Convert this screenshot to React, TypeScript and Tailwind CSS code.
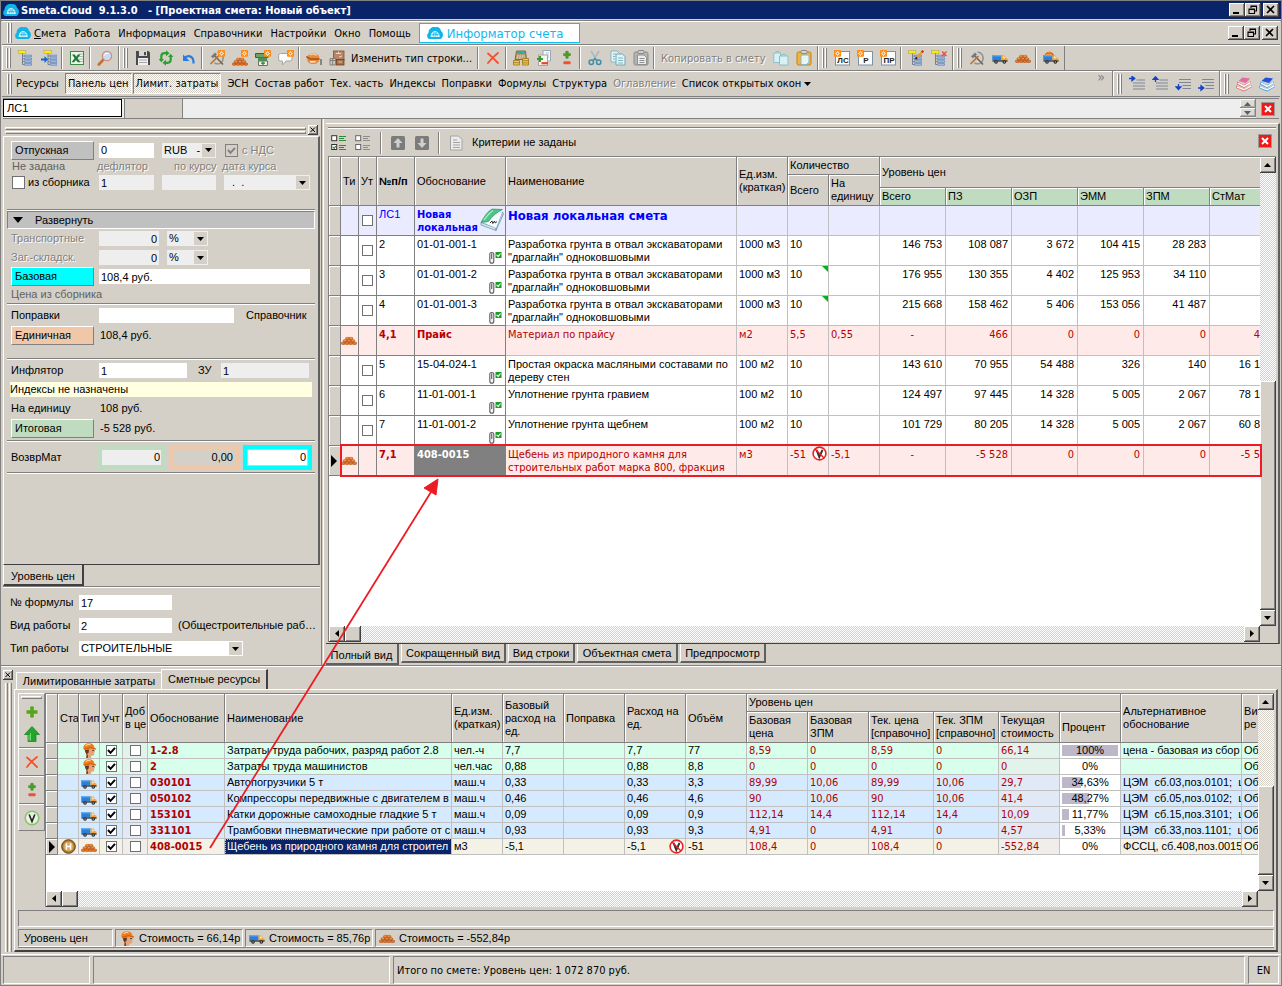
import React from "react";

type Kids = { children?: React.ReactNode };

const RAISED =
  "bg-[#d4d0c8] shadow-[inset_-1px_-1px_0_#404040,inset_1px_1px_0_#ffffff,inset_-2px_-2px_0_#808080]";
const SUNKEN = "border border-t-[#808080] border-l-[#808080] border-b-white border-r-white";
const TAHOMA = "font-['DejaVu_Sans_Condensed','DejaVu_Sans',sans-serif]";
const DITHER =
  "bg-[repeating-conic-gradient(#ffffff_0%_25%,#d4d0c8_0%_50%)] [background-size:2px_2px]";
const DISABLED = "text-[#808080] [text-shadow:1px_1px_0_#ffffff]";

/* ---------- icons ---------- */

function Svg({ children, size = "w-4 h-4", box = "0 0 16 16" }: Kids & { size?: string; box?: string }) {
  return (
    <svg viewBox={box} className={`${size} shrink-0`} fill="none" aria-hidden="true">
      {children}
    </svg>
  );
}

const Cloud = ({ size = "w-4 h-4" }: { size?: string }) => (
  <Svg size={size}>
    <path d="M3 14C-.5 14 -.5 9 1.500 8C1.500 3.500 5.500 1 8.500 2.300C11.500 1.500 13.800 3.500 14 6C16.800 7.500 16.500 13 13.500 14Z" fill="#10b4e8" />
    <path d="M4 11.500C4.500 7.500 6.500 6.500 8 6.500S11.800 7.500 12.300 11.500Z" fill="#b9ecfa" stroke="#fff" strokeWidth=".8" />
    <path d="M6.300 11.500L7 7M8.200 11.500V7M10.200 11.500L9.500 7M4.600 9.500H11.800" stroke="#10b4e8" strokeWidth=".6" />
  </Svg>
);

const TreeBody = () => (
  <>
    <path d="M4.500 3V14.500M4.500 6H7M4.500 8.800H7M4.500 11.600H7M4.500 14.500H7" stroke="#7b7f86" />
    <path d="M6.500 5.200H13.500V6.800H6.500ZM6.500 8H13.500V9.600H6.500ZM6.500 10.800H13.500V12.400H6.500ZM6.500 13.600H13.500V15.200H6.500Z" fill="#b7cdea" stroke="#6386ba" strokeWidth=".8" />
    <rect x=".4" y=".6" width="7.500" height="2.600" fill="#ffee00" stroke="#a8a048" strokeWidth=".5" />
  </>
);
const Tree = () => (
  <Svg>
    <TreeBody />
  </Svg>
);
const TreeInsert = () => (
  <Svg>
    <g transform="translate(2.500 0)">
      <TreeBody />
    </g>
    <path d="M0 9.500H5" stroke="#1463d8" strokeWidth="2" />
    <path d="M3.500 6L7 9.500L3.500 13Z" fill="#1463d8" />
  </Svg>
);
const TreeEdit = () => (
  <Svg>
    <TreeBody />
    <path d="M8.500 8L14.500 1.500" stroke="#e0a030" strokeWidth="2.400" />
    <path d="M13.800 2.300L15.200 .8" stroke="#d03020" strokeWidth="2.400" />
    <path d="M7.500 9L9 7.500" stroke="#222" strokeWidth="1.800" />
  </Svg>
);
const TreeDelete = () => (
  <Svg>
    <TreeBody />
    <path d="M11 1.500L15.500 6M15.500 1.500L11 6" stroke="#f04a3a" strokeWidth="1.400" />
  </Svg>
);
const Excel = () => (
  <Svg>
    <rect x="1.500" y="1.500" width="13" height="13" fill="#eef5ee" stroke="#3f8a4b" />
    <path d="M10 4H14M10 6.500H14M10 9H14M10 11.500H14" stroke="#9cc3a2" />
    <path d="M3 4.500H5.800L7.200 6.800L8.700 4.500H11.500L8.600 8.300L11.500 12.300H8.700L7 9.900L5.200 12.300H2.500L5.600 8.300Z" fill="#1f7a38" />
  </Svg>
);
const Magnifier = () => (
  <Svg>
    <path d="M1.800 14.500L6.500 9.500" stroke="#c8702a" strokeWidth="2.600" strokeLinecap="round" />
    <circle cx="10" cy="6" r="4.700" fill="#c9d9f5" stroke="#cf8d7a" strokeWidth="1.200" />
    <path d="M7.500 5.500C8 3.500 10 3 11.500 3.500" stroke="#fff" strokeWidth="1.200" />
  </Svg>
);
const Save = () => (
  <Svg>
    <path d="M1 1H13.500L15 2.500V15H1Z" fill="#4a4a4c" />
    <rect x="4" y="1" width="8" height="5" fill="#d8d8d8" />
    <rect x="9" y="2" width="2" height="3.200" fill="#4a4a4c" />
    <rect x="3" y="8" width="10" height="7" fill="#efefef" />
    <path d="M4 10H12M4 12.500H12" stroke="#a9a9a9" />
  </Svg>
);
const Refresh = () => (
  <Svg>
    <path d="M3.300 10.500V6.500C3.300 4 4.800 3.200 6.500 3.200H8.500" stroke="#2f9e2f" strokeWidth="2.200" />
    <path d="M8 .2L11.500 3.200L8 6.200Z" fill="#2f9e2f" />
    <path d="M12.700 6V9.500C12.700 12 11.200 12.800 9.500 12.800H7.500" stroke="#2f9e2f" strokeWidth="2.200" />
    <path d="M8 9.800L4.500 12.800L8 15.800Z" fill="#2f9e2f" />
    <path d="M.6 9L3.300 12.200L6 9ZM10 7L12.700 3.800L15.400 7Z" fill="#2f9e2f" />
  </Svg>
);
const Undo = () => (
  <Svg>
    <path d="M4 7.500C8 4.500 13 6.500 12.500 13.500" stroke="#2a7de0" strokeWidth="2.200" />
    <path d="M2 4.500V11H8.500Z" fill="#2a7de0" />
  </Svg>
);
const Spark = () => (
  <>
    <rect x="9" y="0" width="7" height="6.800" rx="1" fill="#ff8a10" />
    <path d="M12.500 .8V6M9.900 3.400H15.100M10.700 1.600L14.300 5.200M14.300 1.600L10.700 5.200" stroke="#ffe9b0" strokeWidth=".8" />
    <circle cx="12.500" cy="3.400" r="1.300" fill="#ff8a10" stroke="#fff" strokeWidth=".7" />
  </>
);
const ToolsBody = () => (
  <>
    <path d="M8.500 2C13 2.500 15.500 7 13.500 11C12 14 8.500 14.500 5.500 13" stroke="#8a9096" strokeWidth="1.500" />
    <path d="M5.500 5.500L14 14.500" stroke="#7a5f43" strokeWidth="1.500" />
    <path d="M1.500 14L9.500 6" stroke="#b3763f" strokeWidth="1.700" />
    <path d="M2 6.500L6 2.500L8 4.500L4 8.200Z" fill="#747b82" />
  </>
);
const Tools = () => (
  <Svg>
    <ToolsBody />
  </Svg>
);
const ToolsNew = () => (
  <Svg>
    <ToolsBody />
    <Spark />
  </Svg>
);
const BRICKS = [
  [0.4, 10.2], [4.2, 10.2], [8, 10.2], [11.8, 10.2],
  [2.2, 7.8], [6, 7.8], [9.8, 7.8],
  [4.6, 5.4], [8, 5.4],
];
const BricksBody = () => (
  <>
    {BRICKS.map(([x, y]) => (
      <rect key={`${x}-${y}`} x={x} y={y} width="3.800" height="2.200" rx=".9" fill="#ee7a26" stroke="#a8460c" strokeWidth=".6" />
    ))}
    <path d="M5.300 6H7.300M8.800 6H10.800M3 8.400H5M6.800 8.400H8.800M10.600 8.400H12.600" stroke="#ffb576" strokeWidth=".6" />
  </>
);
const Bricks = () => (
  <Svg>
    <BricksBody />
  </Svg>
);
const BricksNew = () => (
  <Svg>
    <g transform="translate(0 2.800)">
      <BricksBody />
    </g>
    <Spark />
  </Svg>
);
const MachineNew = () => (
  <Svg>
    <path d="M.5 3.500H13V7.500H.5Z" fill="#6aa06a" stroke="#2f6a34" />
    <path d="M3 7.500H12V11H3Z" fill="#4f8f55" />
    <path d="M3.500 11H12.500V15.500H3.500Z" fill="#eef3ea" stroke="#5f7a5b" />
    <path d="M6 13.200H10M8 11.500V15" stroke="#2f7f3c" strokeWidth="1.200" />
    <Spark />
  </Svg>
);
const SpeechNew = () => (
  <Svg>
    <path d="M2.500 3.500H12Q14 3.500 14 5.500V9Q14 11 12 11H8L4.500 15V11H2.500Q.6 11 .6 9V5.500Q.6 3.500 2.500 3.500Z" fill="#fbfbfb" stroke="#a5a5a5" />
    <Spark />
  </Svg>
);
const Helmet = () => (
  <Svg>
    <path d="M1 7C3 2.500 9 2 12.500 5.500C14.500 8 13.500 13 9 14H5C2 13 1 11 1 7Z" fill="#e58a42" />
    <path d="M.3 6.500L4.500 9H13.500" stroke="#a5500f" strokeWidth="1.400" />
    <path d="M4 5C6 3.500 9 4 10.500 5.500" stroke="#ffd09c" strokeWidth="1.300" />
    <path d="M4 11.800H9.500" stroke="#fbe0c2" strokeWidth="1.600" />
    <path d="M15 9V15" stroke="#555" strokeWidth="1.200" />
  </Svg>
);
const Boxes = () => (
  <Svg>
    <rect x="4.500" y="1" width="10.500" height="9" fill="#b98668" stroke="#7d5238" strokeWidth=".8" />
    <path d="M9.500 1.500V4M7 3.500H12M10 7L13 6" stroke="#f0d3bb" />
    <path d="M1 8.500H6.500V15H1ZM1 10.500H6.500M3.700 8.500V15" fill="#cdc8c2" stroke="#77716b" strokeWidth=".8" />
    <rect x="7.500" y="9.500" width="7.500" height="5.500" fill="#a8714f" stroke="#70401f" strokeWidth=".8" />
    <path d="M9.500 12H13" stroke="#e9c6a8" />
  </Svg>
);
const Cross = ({ size = "w-4 h-4" }: { size?: string }) => (
  <Svg size={size}>
    <path d="M3 3.500C6 6 10 10 13 13M13 3C9 6 6 9 3 13" stroke="#f4512c" strokeWidth="1.800" strokeLinecap="round" />
  </Svg>
);
const CalcCoins = () => (
  <Svg>
    <path d="M3.500 1H12.500L13.500 9.500H2Z" fill="#b79c70" stroke="#6b5636" strokeWidth=".8" />
    <path d="M4.300 1.800H11.800V4H4Z" fill="#2fb0a5" />
    <path d="M4 6H12M3.500 8H12" stroke="#f3e7cf" strokeDasharray="1.500 1" />
    <path d="M.5 10.500H6.500V15H.5ZM.5 12.700H6.500M9.500 8.500H15.500V15H9.500ZM9.500 10.700H15.500M9.500 12.900H15.500" fill="#efc84b" stroke="#9c7617" strokeWidth=".8" />
  </Svg>
);
const DocPlusMinus = () => (
  <Svg>
    <path d="M7 .5H14.500V11H7Z" fill="#fafafa" stroke="#9aa7b5" />
    <path d="M9.500 3H13M9.500 5H13M9.500 7H13" stroke="#b9c6d3" />
    <path d="M2.500 5H11.500V15.500H2.500Z" fill="#f4f4f4" stroke="#a5a5a5" />
    <path d="M1 9H7M4 6V12" stroke="#3b9a28" strokeWidth="2" />
    <path d="M5.500 13.200H12" stroke="#ee4422" strokeWidth="2.200" />
  </Svg>
);
const PlusMinus = () => (
  <Svg>
    <path d="M8 1V8.500M4.300 4.700H11.700" stroke="#4c9a2a" strokeWidth="2.800" />
    <path d="M6 3L8 .5L10 3M6 6.500L8 9L10 6.500" fill="#4c9a2a" />
    <rect x="4.300" y="11.300" width="7.400" height="3" rx="1.200" fill="#ee5133" />
  </Svg>
);
const Scissors = () => (
  <Svg>
    <path d="M4 1L9.500 10M12 1L6.500 10" stroke="#a9bac4" strokeWidth="1.700" />
    <circle cx="4.300" cy="12.300" r="2.200" stroke="#3f8ea8" strokeWidth="1.500" />
    <circle cx="11.700" cy="12.300" r="2.200" stroke="#3f8ea8" strokeWidth="1.500" />
    <path d="M6 10.800L8 8.500L10 10.800" stroke="#3f8ea8" strokeWidth="1.300" />
  </Svg>
);
const Copy = () => (
  <Svg>
    <path d="M1 1H7L9.500 3.500V12H1Z" fill="#e4f3f6" stroke="#86b9c4" />
    <path d="M6 4H12.500L15 6.500V15H6Z" fill="#e4f3f6" stroke="#6fa7b4" />
    <path d="M8 8H13M8 10.500H13M8 13H13M3 4H6M3 6.500H5M3 9H5" stroke="#7fb7c3" />
  </Svg>
);
const CopyPlain = () => (
  <Svg>
    <path d="M.8 3H7.500V12.500H.8ZM3 3V1.500H6V3" fill="#d8f2f4" stroke="#8cc0c8" />
    <path d="M6.500 6H15V15H6.500ZM9 6V4.500H12.500V6" fill="#d8f2f4" stroke="#8cc0c8" />
  </Svg>
);
const PasteGray = () => (
  <Svg>
    <rect x="1" y="2" width="14" height="13" rx="1.500" fill="#b4b4b4" stroke="#8a8a8a" />
    <rect x="5" y=".5" width="6" height="3" rx="1" fill="#cfcfcf" stroke="#8a8a8a" />
    <path d="M4.500 5H11L13.500 7.500V14.500H4.500Z" fill="#ededed" stroke="#8f8f8f" />
    <path d="M6.500 8.500H11.500M6.500 10.500H11.500M6.500 12.500H11.500" stroke="#8f8f8f" />
  </Svg>
);
const PasteGold = () => (
  <Svg>
    <rect x="1" y="2" width="14" height="13" rx="1.500" fill="#f3b43c" stroke="#c0831a" />
    <rect x="5" y=".5" width="6" height="3" rx="1" fill="#d6d6d6" stroke="#8a8a8a" />
    <path d="M5 5H13V12L10.500 14.500H5Z" fill="#e8f5f7" stroke="#86b9c4" />
  </Svg>
);
const LetterDoc = ({ t }: { t: string }) => (
  <Svg>
    <rect x="1.500" y="1.500" width="14" height="13.500" fill="#fdfdfd" stroke="#7b93a8" />
    <text x="9" y="13" textAnchor="middle" fontSize="8" fontFamily="Liberation Sans, sans-serif" fontWeight="bold" fill="#222">
      {t}
    </text>
    <g transform="translate(-9 0)">
      <Spark />
    </g>
  </Svg>
);
const TruckBody = () => (
  <>
    <path d="M.3 5H9.500V10.500H.3Z" fill="#2b7fd6" />
    <path d="M.8 5.800H9" stroke="#7fbdf5" />
    <path d="M9.500 5.500H12.500L13.800 8L15.700 8.800V11.500H9.500Z" fill="#efa436" />
    <path d="M10.800 6.500H12.300L13.200 8.300H10.800Z" fill="#f6f2dc" />
    <path d="M.5 11H15.500" stroke="#2c2c34" strokeWidth="1.200" />
    <circle cx="4" cy="12" r="1.800" fill="#22242a" />
    <circle cx="12.300" cy="12" r="1.800" fill="#22242a" />
    <circle cx="4" cy="12" r=".7" fill="#bbb" />
    <circle cx="12.300" cy="12" r=".7" fill="#bbb" />
  </>
);
const Truck = () => (
  <Svg>
    <TruckBody />
  </Svg>
);
const TruckLoaded = () => (
  <Svg>
    <path d="M1 5.500L3.500 2.500L7 1.500L9.500 3L11.500 5.500Z" fill="#d8621a" />
    <path d="M3 4.500H9M4.500 2.800H8" stroke="#ffa257" strokeWidth=".8" />
    <TruckBody />
  </Svg>
);
const Indent = ({ kind }: { kind: "in" | "up" | "down" | "out" }) => (
  <Svg>
    {kind === "in" || kind === "up" ? (
      <path d="M7.500 4H16M4 7H16M4 10H16M4 13H16" stroke="#7d8796" />
    ) : (
      <path d="M4 3.500H16M4 6.500H16M7.500 9.500H16M7.500 12.500H16" stroke="#7d8796" />
    )}
    {kind === "in" && <path d="M0 2.500H4M3 .3L5.800 2.500L3 4.700Z" stroke="#1243c8" strokeWidth="1.300" fill="#1243c8" />}
    {kind === "up" && <path d="M3.500 3V6M1.200 3.300L3.500 .8L5.800 3.300Z" stroke="#1243c8" strokeWidth="1.300" fill="#1243c8" />}
    {kind === "down" && <path d="M3.500 8V11M1.200 11L3.500 13.500L5.800 11Z" stroke="#1243c8" strokeWidth="1.300" fill="#1243c8" />}
    {kind === "out" && <path d="M0 12H4M3 9.800L5.800 12L3 14.200Z" stroke="#1243c8" strokeWidth="1.300" fill="#1243c8" />}
  </Svg>
);
const Books = ({ top, side }: { top: string; side: string }) => (
  <Svg>
    <path d="M0 9.500L7.500 13L16 9V11L8 15.500L0 12Z" fill={side} />
    <path d="M.8 10.800L8 13.900L15.500 9.900" stroke="#fff" strokeWidth="1.300" />
    <path d="M1.500 5.500L7.500 9L15 5.500V7.500L8 12L1 8.500Z" fill={side} />
    <path d="M2 7.200L8 10.400L14.500 6.700" stroke="#fff" strokeWidth="1.500" />
    <path d="M2.500 5L6.500 1.500L14 2.500L10 7Z" fill={top} />
  </Svg>
);
const CheckList = ({ on }: { on: boolean }) => (
  <Svg>
    <rect x=".7" y=".7" width="5" height="5" fill="#fff" stroke={on ? "#333" : "#666"} />
    <rect x=".7" y="9.500" width="5" height="5" fill="#fff" stroke={on ? "#333" : "#666"} />
    {on && <path d="M1.800 11.800L3.200 13.400L4.900 11" stroke="#2f8a2f" strokeWidth="1.200" />}
    <path
      d="M8 1.500H15M8 3.500H13M8 5.500H15M8 10.500H15M8 12.500H13M8 14.500H15"
      stroke={on ? "#2f8a3a" : "#8d8d8d"}
    />
  </Svg>
);
const ArrowBox = ({ down = false }: { down?: boolean }) => (
  <Svg>
    <rect x="1" y="1" width="14" height="14" rx="1.500" fill="#7b7b7b" />
    <path d={down ? "M8 13L3.500 8H6.500V3.500H9.500V8H12.500Z" : "M8 3L12.500 8H9.500V12.500H6.500V8H3.500Z"} fill="#cfcfcf" />
  </Svg>
);
const DocGray = () => (
  <Svg>
    <path d="M2.500 1H10.500L14 4.500V15H2.500Z" fill="#ebebeb" stroke="#a3a3a3" />
    <path d="M5 5H9M5 7.500H12M5 10H12M5 12.500H12" stroke="#a3a3a3" />
  </Svg>
);
const GreenBook = () => (
  <Svg size="w-6 h-6" box="0 0 24 24">
    <path d="M1 14.500L16 20L16 22.500L1 17Z" fill="#d5e6ee" stroke="#5c8fa5" strokeWidth=".7" />
    <path d="M22.500 4L23.500 6L16 22.500V20Z" fill="#b8dcea" stroke="#5c8fa5" strokeWidth=".7" />
    <path d="M8 12L22 4.500L16 20L7 16Z" fill="#f4fafc" />
    <path d="M1 14.500C4 9 7 4 12 1L22.500 1.500C17 4 12 8 8.500 13.500Z" fill="#4fc488" stroke="#1f8a55" strokeWidth=".6" />
    <path d="M4 12C7 8 9 5 13 2.500" stroke="#a9ecc8" strokeWidth="1.300" />
    <path d="M10 15L12 13L12.800 15.500L14.500 13L15.200 15L17 13.500" stroke="#333" strokeWidth="1" />
  </Svg>
);
const ClipCheck = () => (
  <Svg size="w-[13px] h-[13px]" box="0 0 13 13">
    <path d="M2.700 8V2.500M.8 3Q.8 1.500 2.800 1.500Q4.800 1.500 4.800 3V10Q4.800 12.300 2.800 12.300Q.8 12.300 .8 10Z" stroke="#5f5f5f" strokeWidth="1.100" fill="#f2f2f2" />
    <rect x="6.500" y="1" width="6" height="6" fill="#1f9a2a" />
    <path d="M7.600 3.800L9.200 5.400L11.500 2.500" stroke="#fff" strokeWidth="1.100" />
  </Svg>
);
const NoV = () => (
  <Svg size="w-[15px] h-[15px]" box="0 0 15 15">
    <circle cx="7.500" cy="7.500" r="6.400" fill="#fff" stroke="#ea2020" strokeWidth="1.600" />
    <path d="M4.500 3.800L7.300 11L10.500 3.800" stroke="#333" strokeWidth="2" />
    <path d="M3 3L12 12" stroke="#ea2020" strokeWidth="1.400" />
  </Svg>
);
const GreenV = () => (
  <Svg>
    <circle cx="8" cy="8" r="6.800" fill="#e9f2e2" stroke="#86c46a" strokeWidth="1.500" />
    <path d="M5.200 4.500L8 11.500L10.800 4.500" stroke="#222" strokeWidth="1.600" />
  </Svg>
);
const HBadge = () => (
  <Svg size="w-[15px] h-[15px]">
    <circle cx="8" cy="8" r="7.300" fill="#a9762f" stroke="#5f3d10" />
    <circle cx="8" cy="8" r="5.400" fill="#d7a75a" />
    <path d="M5.800 4.500V11.500M10.200 4.500V11.500M5.800 8H10.200" stroke="#fff" strokeWidth="1.600" />
  </Svg>
);
const Worker = () => (
  <Svg size="w-[15px] h-[15px]">
    <path d="M4.500 6H13L14 9.500L13 10V12.500Q13 13.500 10 13.500L9.500 16H5L4.500 12Z" fill="#e3a67c" />
    <path d="M3 7H7.500L7 10.500L5.500 11.500L6.500 14L6 16H4.500L5 12.500Q3 10.500 3 7Z" fill="#6b351a" />
    <path d="M11 8H12.500" stroke="#222" strokeWidth="1.200" />
    <path d="M1.500 6.500C1 2 4.500 .3 7.500 .3C11 .3 13 2.300 13.200 4.800L15.500 6.200L14.500 7.300L10 6L3 7.800Z" fill="#f07a1c" />
    <path d="M4 3C5 1.800 7 1.300 9 1.700" stroke="#ffd09a" strokeWidth="1.300" />
    <path d="M2.500 6.600L9 4.900L14 6.300" stroke="#b94f08" strokeWidth=".7" />
  </Svg>
);
const Plus = () => (
  <Svg>
    <path d="M8 2.500V13.500M2.500 8H13.500" stroke="#55a51c" strokeWidth="3.600" />
  </Svg>
);
const BigUp = () => (
  <Svg>
    <path d="M8 .5L15.500 8.500H12V15.500H4V8.500H.5Z" fill="#22a52c" stroke="#138018" strokeWidth=".7" />
    <path d="M5 9V14.500M6.500 7V14.500" stroke="#7fe07f" strokeWidth=".9" />
  </Svg>
);

/* ---------- small controls ---------- */

const Tri = ({ dir = "down" }: { dir?: "up" | "down" | "left" | "right" }) => (
  <svg viewBox="0 0 8 8" className="h-2 w-2 shrink-0" aria-hidden="true">
    {dir === "down" && <path d="M0 2H7L3.500 6Z" />}
    {dir === "up" && <path d="M0 6H7L3.500 2Z" />}
    {dir === "left" && <path d="M6 0V7L2 3.500Z" />}
    {dir === "right" && <path d="M2 0V7L6 3.500Z" />}
  </svg>
);

function WinButton({ kind, label }: { kind: "min" | "restore" | "close"; label: string }) {
  return (
    <button type="button" aria-label={label} className={`flex h-[14px] w-4 items-center justify-center ${RAISED}`}>
      <svg viewBox="0 0 10 10" className="h-[10px] w-[10px]" fill="none" stroke="#000" aria-hidden="true">
        {kind === "min" && <path d="M1 8H7" strokeWidth="2" />}
        {kind === "restore" && <path d="M3 1H8.500V6H7M3 .5V3M1 4H6.500V8.500H1ZM1 4.500H6.500M3 1.500H8.500" strokeWidth="1.100" />}
        {kind === "close" && <path d="M1 1L8 8M8 1L1 8" strokeWidth="1.600" />}
      </svg>
    </button>
  );
}

const RedClose = ({ label }: { label: string }) => (
  <button type="button" aria-label={label} className="flex h-[14px] w-[14px] items-center justify-center border border-[#9b9b9b] bg-[#f01818]">
    <svg viewBox="0 0 8 8" className="h-2 w-2" stroke="#fff" strokeWidth="2" aria-hidden="true">
      <path d="M1 1L7 7M7 1L1 7" />
    </svg>
  </button>
);

const DockClose = ({ label }: { label: string }) => (
  <button type="button" aria-label={label} className={`flex h-[10px] w-[10px] shrink-0 items-center justify-center ${RAISED}`}>
    <svg viewBox="0 0 6 6" className="h-[6px] w-[6px]" stroke="#000" aria-hidden="true">
      <path d="M.5 .5L5 5M5 .5L.5 5" />
    </svg>
  </button>
);

const Grip = () => (
  <span className="mr-[3px] flex h-[20px] shrink-0 gap-px">
    <span className="w-[2px] border-l border-r border-l-white border-r-[#808080]" />
    <span className="w-[2px] border-l border-r border-l-white border-r-[#808080]" />
  </span>
);

const Sep = () => <span className="mx-[1px] h-[22px] w-[3px] shrink-0 border-l border-[#808080] shadow-[inset_1px_0_0_#ffffff]" />;

const Group = ({ children, last = false }: Kids & { last?: boolean }) => (
  <div className={`flex items-center self-stretch pl-[4px] pr-[2px] shadow-[inset_1px_0_0_#ffffff] ${last ? "" : "border-r border-[#808080]"}`}>
    <Grip />
    {children}
  </div>
);

const Tool = ({ children, label }: Kids & { label: string }) => (
  <button type="button" aria-label={label} title={label} className="flex h-[22px] w-[23px] shrink-0 items-center justify-center">
    {children}
  </button>
);

const Field = ({ label, value, className = "", ro = false }: { label: string; value: string; className?: string; ro?: boolean }) => (
  <input
    aria-label={label}
    defaultValue={value}
    readOnly={ro}
    className={`h-[15px] min-w-0 px-[2px] ${ro ? "bg-[#eeeeee]" : "bg-white"} ${className}`}
  />
);

function Combo({ label, options, className, bg = "bg-[#eeeeee]" }: { label: string; options: string[]; className: string; bg?: string }) {
  return (
    <span className={`grid h-[15px] shrink-0 items-center ${bg} ${className}`}>
      <select aria-label={label} className="h-[15px] w-full appearance-none pl-[2px] pr-[14px] [grid-area:1/1]">
        {options.map((o) => (
          <option key={o}>{o}</option>
        ))}
      </select>
      <span className="pointer-events-none mr-px flex h-[13px] w-[13px] items-center justify-center justify-self-end bg-[#d4d0c8] [grid-area:1/1]">
        <Tri />
      </span>
    </span>
  );
}

function Check({ label, checked = false, size = "h-[11px] w-[11px]", gray = false }: { label: string; checked?: boolean; size?: string; gray?: boolean }) {
  return (
    <span className="inline-grid shrink-0 place-items-center align-top">
      <input
        type="checkbox"
        aria-label={label}
        defaultChecked={checked}
        className={`${size} appearance-none border [grid-area:1/1] ${gray ? "border-[#808080] bg-[#d4d0c8]" : "border-[#707070] bg-white"}`}
      />
      {checked && (
        <svg viewBox="0 0 9 9" className="pointer-events-none h-[9px] w-[9px] [grid-area:1/1]" fill="none" aria-hidden="true">
          <path d="M1 4L3.500 6.800L8 1.800" stroke={gray ? "#808080" : "#000"} strokeWidth="2" />
        </svg>
      )}
    </span>
  );
}

const PriceButton = ({ children, color }: Kids & { color: string }) => (
  <button type="button" className={`h-[19px] w-[83px] shrink-0 border border-t-white border-l-white border-r-[#808080] border-b-[#808080] pl-[3px] text-left ${color}`}>
    {children}
  </button>
);

const Line = () => <div className="h-[2px] shrink-0 border-t border-b border-t-[#808080] border-b-white" />;

const ScrollBtn = ({ dir, label }: { dir: "up" | "down" | "left" | "right"; label: string }) => (
  <button type="button" aria-label={label} className={`flex h-4 w-4 shrink-0 items-center justify-center ${RAISED}`}>
    <Tri dir={dir} />
  </button>
);

const HScroll = () => (
  <div className={`flex h-4 flex-1 ${DITHER}`}>
    <ScrollBtn dir="left" label="Влево" />
    <div className={`w-4 ${RAISED}`} />
    <div className="flex-1" />
    <ScrollBtn dir="right" label="Вправо" />
  </div>
);

const VScroll = ({ thumb }: { thumb: string }) => (
  <div className={`flex w-4 shrink-0 flex-col ${DITHER}`}>
    <ScrollBtn dir="up" label="Вверх" />
    <div className="flex-1" />
    <div className={`${thumb} ${RAISED}`} />
    <ScrollBtn dir="down" label="Вниз" />
  </div>
);

/* ---------- header bars ---------- */

const MENU = ["Работа", "Информация", "Справочники", "Настройки", "Окно", "Помощь"];

function Bars() {
  return (
    <header className={TAHOMA}>
      <div className="flex h-[18px] items-center bg-[#0a246a] pl-[2px] pr-[2px] font-bold text-white">
        <Cloud />
        <span className="ml-[2px] flex-1 whitespace-pre">Smeta.Cloud  9.1.3.0   - [Проектная смета: Новый объект]</span>
        <WinButton kind="min" label="Свернуть" />
        <WinButton kind="restore" label="Восстановить" />
        <span className="w-[2px]" />
        <WinButton kind="close" label="Закрыть" />
      </div>
      <div className="mt-px border-t border-[#808080] px-px">
        <nav className="flex h-[24px] items-center gap-[8px] border-t border-b border-t-white border-b-[#808080] pl-[5px] pr-[2px]">
          <span className="flex items-center">
            <Grip />
            <Cloud />
            <a href="#smeta" className="ml-[3px]">
              <u>С</u>мета
            </a>
          </span>
          {MENU.map((m) => (
            <a key={m} href="#menu" className="whitespace-nowrap">
              {m}
            </a>
          ))}
          <button type="button" className="flex h-[20px] w-[161px] items-center gap-[4px] border border-[#10c0f0] bg-white pl-[7px] text-[13px] text-[#10b8f0]">
            <Cloud />
            Информатор счета
          </button>
          <span className="ml-auto flex">
            <WinButton kind="min" label="Свернуть документ" />
            <WinButton kind="restore" label="Восстановить документ" />
            <span className="w-[2px]" />
            <WinButton kind="close" label="Закрыть документ" />
          </span>
        </nav>
        <div className="flex h-[26px] border-t border-b border-t-white border-b-[#808080]">
          <Group>
            <Tool label="Дерево"><Tree /></Tool>
            <Tool label="Вставить в дерево"><TreeInsert /></Tool>
            <Sep />
            <Tool label="Excel"><Excel /></Tool>
            <Sep />
            <Tool label="Поиск"><Magnifier /></Tool>
          </Group>
          <Group>
            <Tool label="Сохранить"><Save /></Tool>
            <Tool label="Обновить"><Refresh /></Tool>
            <Tool label="Отменить"><Undo /></Tool>
            <Sep />
            <Tool label="Новая работа"><ToolsNew /></Tool>
            <Tool label="Новый материал"><BricksNew /></Tool>
            <Tool label="Новое оборудование"><MachineNew /></Tool>
            <Tool label="Новый комментарий"><SpeechNew /></Tool>
            <Sep />
            <Tool label="Каска"><Helmet /></Tool>
            <Tool label="Склад"><Boxes /></Tool>
            <button type="button" className="w-[128px] whitespace-nowrap pl-[3px] text-left">Изменить тип строки...</button>
            <Sep />
            <Tool label="Удалить"><Cross /></Tool>
            <Sep />
            <Tool label="Расчёт"><CalcCoins /></Tool>
            <Tool label="Поправка строки"><DocPlusMinus /></Tool>
            <Tool label="Плюс-минус"><PlusMinus /></Tool>
            <Sep />
            <Tool label="Вырезать"><Scissors /></Tool>
            <Tool label="Копировать"><Copy /></Tool>
            <Tool label="Вставить"><PasteGray /></Tool>
            <Sep />
            <button type="button" className={`w-[112px] whitespace-nowrap pl-[4px] text-left ${DISABLED}`}>Копировать в смету</button>
            <Tool label="Копировать лист"><CopyPlain /></Tool>
            <Tool label="Вставить лист"><PasteGold /></Tool>
          </Group>
          <Group>
            <Tool label="Новая ЛС"><LetterDoc t="ЛС" /></Tool>
            <Tool label="Новый раздел"><LetterDoc t="Р" /></Tool>
            <Tool label="Новый подраздел"><LetterDoc t="ПР" /></Tool>
            <Sep />
            <Tool label="Изменить раздел"><TreeEdit /></Tool>
            <Tool label="Удалить раздел"><TreeDelete /></Tool>
          </Group>
          <Group>
            <Tool label="Труд"><Tools /></Tool>
            <Tool label="Машины"><Truck /></Tool>
            <Tool label="Материалы"><Bricks /></Tool>
            <Sep />
            <Tool label="Перевозка"><TruckLoaded /></Tool>
          </Group>
        </div>
        <div className="flex h-[26px] border-b border-[#808080] shadow-[inset_0_1px_0_#ffffff]">
          <div className="flex min-w-0 flex-1 items-center gap-[6px] border-r border-[#808080] pl-[5px] pr-[3px]">
            <span className="flex items-center">
              <Grip />
              <button type="button" className="ml-px">Ресурсы</button>
            </span>
            <span className="flex gap-px">
              <button type="button" className={`h-[21px] whitespace-nowrap px-[2px] ${DITHER} ${SUNKEN}`}>Панель цен</button>
              <button type="button" className={`h-[21px] whitespace-nowrap px-[2px] ${DITHER} ${SUNKEN}`}>Лимит. затраты</button>
            </span>
            {["ЭСН", "Состав работ", "Тех. часть", "Индексы", "Поправки", "Формулы", "Структура"].map((t) => (
              <button key={t} type="button" className="whitespace-nowrap">{t}</button>
            ))}
            <button type="button" className={DISABLED}>Оглавление</button>
            <button type="button" className="flex items-center gap-[3px] whitespace-nowrap">
              Список открытых окон
              <Tri />
            </button>
            <span className="ml-auto self-start pr-[4px] text-[14px] text-[#808080]">»</span>
          </div>
          <Group>
            <Tool label="Вложить"><Indent kind="in" /></Tool>
            <Tool label="Вверх на строку"><Indent kind="up" /></Tool>
            <Tool label="Вниз на строку"><Indent kind="down" /></Tool>
            <Tool label="Вынести"><Indent kind="out" /></Tool>
          </Group>
          <Group last>
            <Tool label="Красный сборник"><Books top="#e86aa0" side="#d96a6a" /></Tool>
            <Tool label="Синий сборник"><Books top="#2352d8" side="#3c9be0" /></Tool>
          </Group>
        </div>
      </div>
      <div className="mx-[2px] mt-px flex h-[21px] border-t border-b border-[#808080] bg-[#eeeeee] font-['Liberation_Sans',sans-serif]">
        <input aria-label="Ячейка" defaultValue="ЛС1" className="h-[18px] w-[119px] border border-black bg-white px-[3px]" />
        <span className="ml-[2px] w-[59px] border-l border-r border-[#808080] bg-[#d4d0c8]" />
        <span className="flex-1" />
        <span className="flex h-[19px] w-4 flex-col">
          <button type="button" aria-label="Больше" className={`flex h-[9px] items-center justify-center opacity-60 ${RAISED}`}><Tri dir="up" /></button>
          <button type="button" aria-label="Меньше" className={`flex h-[9px] items-center justify-center opacity-60 ${RAISED}`}><Tri /></button>
        </span>
        <span className="flex w-[23px] items-center justify-center bg-[#d4d0c8]">
          <RedClose label="Закрыть строку" />
        </span>
      </div>
    </header>
  );
}

/* ---------- left price panel ---------- */

const ROW = "flex shrink-0 items-center pl-[4px]";
const CAP = "w-[88px] shrink-0 whitespace-nowrap";

function PricePanel() {
  return (
    <aside className="flex w-[321px] shrink-0 flex-col border-r border-[#808080] pl-[2px] pr-[1px]">
      <div className="flex h-[17px] items-start gap-[2px] px-[2px] pt-[6px]">
        <span className="mt-[2px] flex-1">
          <span className="mb-px block h-[3px] border border-t-white border-l-white border-r-[#808080] border-b-[#808080]" />
          <span className="block h-[3px] border border-t-white border-l-white border-r-[#808080] border-b-[#808080]" />
        </span>
        <DockClose label="Закрыть панель цен" />
      </div>
      <div className="flex flex-1 flex-col border border-r-2 border-t-white border-l-white border-r-[#606060] border-b-[#404040] px-[3px] pt-[3px]">
        <div className={`${ROW} h-[20px]`}>
          <PriceButton color="bg-[#c0c0c0]">Отпускная</PriceButton>
          <Field label="Дефлятор базы" value="0" className="ml-[5px] w-[55px]" />
          <Combo label="Валюта" options={["RUB\u00a0\u00a0\u00a0-"]} className="ml-[8px] w-[54px]" />
          <label className={`ml-[9px] flex items-center gap-[4px] whitespace-nowrap ${DISABLED}`}>
            <Check label="с НДС" checked gray size="h-[13px] w-[13px]" />с НДС
          </label>
        </div>
        <div className={`${ROW} h-[13px] text-[#606060]`}>
          <span className="w-[86px] pl-[1px]">Не задана</span>
          <span className={`w-[77px] ${DISABLED}`}>дефлятор</span>
          <span className={`w-[48px] ${DISABLED}`}>по курсу</span>
          <span className={`whitespace-nowrap ${DISABLED}`}>дата курса</span>
        </div>
        <div className={`${ROW} h-[19px]`}>
          <label className={`${CAP} flex items-center gap-[3px] pl-[1px]`}>
            <Check label="из сборника" size="h-[13px] w-[13px]" />
            из сборника
          </label>
          <Field label="Дефлятор" value="1" ro className="w-[55px]" />
          <Field label="По курсу" value="" ro className="ml-[8px] w-[54px]" />
          <Combo label="Дата курса" options={["\u00a0\u00a0.\u00a0\u00a0."]} className="ml-[8px] w-[86px]" />
        </div>
        <div className="mt-[17px]"><Line /></div>
        <button type="button" className={`flex h-[18px] shrink-0 items-center gap-[12px] bg-[#c0c0c0] pl-[5px] ${SUNKEN}`}>
          <svg viewBox="0 0 10 6" className="h-[6px] w-[10px]" aria-hidden="true"><path d="M0 0H10L5 6Z" /></svg>
          Развернуть
        </button>
        {["Транспортные", "Заг.-складск."].map((t) => (
          <div key={t} className={`${ROW} h-[19px]`}>
            <span className={`${CAP} ${DISABLED}`}>{t}</span>
            <Field label={t} value="0" ro className="w-[60px] text-right" />
            <Combo label={`${t} единица`} options={["%"]} className="ml-[8px] w-[41px]" />
          </div>
        ))}
        <div className={`${ROW} h-[19px]`}>
          <PriceButton color="bg-[#00ffff]">Базовая</PriceButton>
          <Field label="Базовая цена" value="108,4 руб." className="ml-[5px] w-[211px]" />
        </div>
        <div className={`${ROW} h-[17px] text-[#606060]`}>Цена из сборника</div>
        <Line />
        <div className={`${ROW} h-[21px]`}>
          <label htmlFor="popr" className={CAP}>Поправки</label>
          <input id="popr" className="h-[15px] w-[135px] bg-white" />
          <a href="#ref" className="ml-[12px]">Справочник</a>
        </div>
        <div className={`${ROW} h-[19px]`}>
          <PriceButton color="bg-[#f0c8a8]">Единичная</PriceButton>
          <span className="ml-[6px]">108,4 руб.</span>
        </div>
        <div className="mt-[13px]"><Line /></div>
        <div className={`${ROW} h-[21px]`}>
          <label htmlFor="infl" className={CAP}>Инфлятор</label>
          <input id="infl" defaultValue="1" className="h-[15px] w-[88px] bg-white px-[2px]" />
          <label htmlFor="zu" className="ml-[11px] w-[23px]">ЗУ</label>
          <input id="zu" defaultValue="1" className="h-[15px] w-[88px] bg-[#eeeeee] px-[2px]" />
        </div>
        <div className="ml-[3px] mr-[3px] mt-px h-[15px] shrink-0 bg-[#ffffe1] leading-[15px]">Индексы не назначены</div>
        <div className={`${ROW} h-[22px]`}>
          <span className={CAP}>На единицу</span>
          <span className="ml-[1px]">108 руб.</span>
        </div>
        <div className={`${ROW} mb-[2px] h-[19px]`}>
          <PriceButton color="bg-[#c0dcc0]">Итоговая</PriceButton>
          <span className="ml-[6px]">-5 528 руб.</span>
        </div>
        <Line />
        <div className={`${ROW} h-[30px] gap-[4px]`}>
          <span className="w-[82px]">ВозврМат</span>
          <input aria-label="Возврат итог" defaultValue="0" className="h-[25px] w-[69px] border-4 border-[#c0dcc0] bg-[#eeeeee] px-[2px] text-right shadow-[inset_0_0_0_1px_#d4d0c8]" />
          <input aria-label="Возврат единичная" defaultValue="0,00" className="h-[25px] w-[69px] border-4 border-[#f0c8a8] px-[2px] text-right" />
          <input aria-label="Возврат базовая" defaultValue="0" className="h-[25px] w-[69px] border-4 border-[#00ffff] bg-white px-[2px] text-right shadow-[inset_0_0_0_1px_#d4d0c8]" />
        </div>
        <Line />
      </div>
      <div className="flex h-[21px] shrink-0">
        <button type="button" className="w-[81px] border-l border-r-2 border-b-2 border-l-white border-r-[#404040] border-b-[#404040] pt-[4px]">Уровень цен</button>
      </div>
      <Line />
      <div className="pb-[5px] pl-[7px] pt-[3px]">
        <div className="flex h-[23px] items-center">
          <label htmlFor="formula" className="w-[69px] whitespace-nowrap">№ формулы</label>
          <input id="formula" defaultValue="17" className="h-[15px] w-[93px] bg-white px-[2px]" />
        </div>
        <div className="flex h-[23px] items-center">
          <label htmlFor="kind" className="w-[69px] whitespace-nowrap">Вид работы</label>
          <input id="kind" defaultValue="2" className="h-[15px] w-[93px] bg-white px-[2px]" />
          <span className="ml-[6px] min-w-0 flex-1 truncate">(Общестроительные работы)</span>
        </div>
        <div className="flex h-[23px] items-center">
          <span className="w-[69px] whitespace-nowrap">Тип работы</span>
          <Combo label="Тип работы" options={["СТРОИТЕЛЬНЫЕ"]} bg="bg-white" className="w-[164px]" />
        </div>
      </div>
    </aside>
  );
}

/* ---------- estimate grid ---------- */

const TH = "overflow-hidden whitespace-nowrap border-r border-b border-[#808080] bg-[#d4d0c8] p-0 pl-[2px] text-left font-normal shadow-[inset_1px_1px_0_#ffffff]";

type Row = {
  n: string;
  code: string;
  name: React.ReactNode;
  unit: string;
  qty: string;
  per?: string;
  v: string[];
  mark?: boolean;
  price?: boolean;
  current?: boolean;
};

const DIGGER = (
  <>
    Разработка грунта в отвал экскаваторами
    <br />
    "драглайн" одноковшовыми
  </>
);

const ROWS: Row[] = [
  { n: "2", code: "01-01-001-1", name: DIGGER, unit: "1000 м3", qty: "10", v: ["146 753", "108 087", "3 672", "104 415", "28 283", ""] },
  { n: "3", code: "01-01-001-2", name: DIGGER, unit: "1000 м3", qty: "10", mark: true, v: ["176 955", "130 355", "4 402", "125 953", "34 110", ""] },
  { n: "4", code: "01-01-001-3", name: DIGGER, unit: "1000 м3", qty: "10", mark: true, v: ["215 668", "158 462", "5 406", "153 056", "41 487", ""] },
  { n: "4,1", code: "Прайс", name: "Материал по прайсу", unit: "м2", qty: "5,5", per: "0,55", price: true, v: ["-", "466", "0", "0", "0", "4"] },
  {
    n: "5", code: "15-04-024-1", unit: "100 м2", qty: "10", v: ["143 610", "70 955", "54 488", "326", "140", "16 1"],
    name: (
      <>
        Простая окраска масляными составами по
        <br />
        дереву стен
      </>
    ),
  },
  { n: "6", code: "11-01-001-1", name: "Уплотнение грунта гравием", unit: "100 м2", qty: "10", v: ["124 497", "97 445", "14 328", "5 005", "2 067", "78 1"] },
  { n: "7", code: "11-01-001-2", name: "Уплотнение грунта щебнем", unit: "100 м2", qty: "10", v: ["101 729", "80 205", "14 328", "5 005", "2 067", "60 8"] },
  {
    n: "7,1", code: "408-0015", unit: "м3", qty: "-51", per: "-5,1", price: true, current: true, v: ["-", "-5 528", "0", "0", "0", "-5 5"],
    name: (
      <>
        Щебень из природного камня для
        <br />
        строительных работ марка 800, фракция
      </>
    ),
  },
];

function EstimateTable() {
  const lead = "overflow-hidden whitespace-nowrap border-r border-b border-[#808080] p-0 pt-[2px] align-top";
  const cell = "overflow-hidden whitespace-nowrap border-r border-b border-[#c0c0c0] p-0 pl-[2px] pt-[2px] align-top";
  const gutter = "border-r border-b border-[#808080] bg-[#d4d0c8] p-0 pl-[2px] align-middle shadow-[inset_1px_1px_0_#ffffff]";
  return (
    <table className="w-[997px] table-fixed border-separate border-spacing-0">
      <colgroup>
        <col className="w-[12px]" />
        <col className="w-[18px]" />
        <col className="w-[18px]" />
        <col className="w-[38px]" />
        <col className="w-[91px]" />
        <col className="w-[231px]" />
        <col className="w-[51px]" />
        <col className="w-[41px]" />
        <col className="w-[51px]" />
        <col className="w-[66px]" />
        <col className="w-[66px]" />
        <col className="w-[66px]" />
        <col className="w-[66px]" />
        <col className="w-[66px]" />
        <col className="w-[116px]" />
      </colgroup>
      <thead>
        <tr className="h-[18px]">
          <th rowSpan={3} className={TH} />
          <th rowSpan={3} className={TH}>Ти</th>
          <th rowSpan={3} className={TH}>Ут</th>
          <th rowSpan={3} className={`${TH} !font-bold`}>№п/п</th>
          <th rowSpan={3} className={TH}>Обоснование</th>
          <th rowSpan={3} className={TH}>Наименование</th>
          <th rowSpan={3} className={TH}>
            Ед.изм.
            <br />
            (краткая)
          </th>
          <th colSpan={2} className={TH}>Количество</th>
          <th colSpan={6} rowSpan={2} className={TH}>Уровень цен</th>
        </tr>
        <tr className="h-[13px]">
          <th rowSpan={2} className={TH}>Всего</th>
          <th rowSpan={2} className={TH}>
            На
            <br />
            единицу
          </th>
        </tr>
        <tr className="h-[18px]">
          {["Всего", "ПЗ", "ОЗП", "ЭММ", "ЗПМ", "СтМат"].map((t) => (
            <th key={t} className={`${TH} !bg-[#c0dcc0]`}>{t}</th>
          ))}
        </tr>
      </thead>
      <tbody>
        <tr className="h-[30px] bg-[#ebebff] text-[#0000ff]">
          <td className={gutter} />
          <td className={lead} />
          <td className={`${lead} !pt-[9px] text-center`}><Check label="Учёт ЛС1" /></td>
          <td className={`${lead} pl-[2px]`}>ЛС1</td>
          <td className={lead}>
            <div className="flex h-[26px] items-start overflow-hidden pl-[2px]">
              <span className={`w-[63px] overflow-hidden font-bold ${TAHOMA}`}>
                Новая
                <br />
                локальная
              </span>
              <GreenBook />
            </div>
          </td>
          <td className={`${cell} text-[13px] font-bold leading-[16px] ${TAHOMA}`}>Новая локальная смета</td>
          {[0, 1, 2, 3, 4, 5, 6, 7, 8].map((i) => (
            <td key={i} className={cell} />
          ))}
        </tr>
        {ROWS.map((r) => {
          const red = r.price ? `text-[#b80000] ${TAHOMA}` : "";
          return (
            <tr key={r.n} className={`h-[30px] ${r.price ? "bg-[#ffeaea]" : ""}`}>
              <td className={gutter}>
                {r.current && (
                  <svg viewBox="0 0 6 12" className="h-[12px] w-[6px]" aria-hidden="true"><path d="M0 0L6 6L0 12Z" /></svg>
                )}
              </td>
              <td className={`${lead} !pt-[6px]`}>{r.price && <Bricks />}</td>
              <td className={`${lead} !pt-[9px] text-center`}>{!r.price && <Check label={`Учёт ${r.n}`} />}</td>
              <td className={`${lead} pl-[2px] ${red} ${r.price ? "font-bold" : ""}`}>{r.n}</td>
              <td className={`${lead} ${r.current ? "!bg-[#808080]" : ""}`}>
                <div className={`flex h-[26px] pl-[2px] ${red} ${r.price ? "font-bold" : ""} ${r.current ? "!text-white" : ""}`}>
                  <span className="flex-1">{r.code}</span>
                  {!r.price && <span className="mr-[3px] self-end"><ClipCheck /></span>}
                </div>
              </td>
              <td className={`${cell} ${red}`}>{r.name}</td>
              <td className={`${cell} ${red}`}>{r.unit}</td>
              <td className={`${cell} ${red}`}>
                <div className="flex h-[26px] items-start justify-between">
                  {r.qty}
                  {r.mark && (
                    <svg viewBox="0 0 6 6" className="mt-[-2px] h-[6px] w-[6px]" aria-hidden="true"><path d="M0 0H6V6Z" fill="#00b418" /></svg>
                  )}
                  {r.current && <span className="mt-[-2px] pr-px"><NoV /></span>}
                </div>
              </td>
              <td className={`${cell} ${red}`}>{r.per}</td>
              {r.v.map((x, i) => (
                <td key={i} className={`${cell} ${red} ${i === 5 ? "pr-[65px]" : x === "-" ? "pr-[31px]" : "pr-[3px]"} text-right`}>{x}</td>
              ))}
            </tr>
          );
        })}
      </tbody>
    </table>
  );
}

function EstimatePanel() {
  return (
    <section className="ml-[1px] flex min-w-0 flex-1 flex-col border-l border-white pb-0 pl-[2px] pr-[1px] pt-[4px]">
      <div className="flex flex-1 flex-col border-t border-r-2 border-b border-t-white border-r-[#606060] border-b-[#404040] pb-px pl-[2px] pr-[2px] pt-[3px]">
        <Line />
        <div className="flex h-[27px] shrink-0 items-center pl-[3px]">
          <button type="button" aria-label="Отметить все" className="mr-[8px]"><CheckList on /></button>
          <button type="button" aria-label="Снять отметки" className="mr-[8px]"><CheckList on={false} /></button>
          <Sep />
          <button type="button" aria-label="Выше" className="ml-[6px] mr-[8px]"><ArrowBox /></button>
          <button type="button" aria-label="Ниже" className="mr-[7px]"><ArrowBox down /></button>
          <Sep />
          <button type="button" className="ml-[6px] flex flex-1 items-center gap-[8px]">
            <DocGray />
            Критерии не заданы
          </button>
          <span className="mr-[4px] pb-[4px]"><RedClose label="Закрыть смету" /></span>
        </div>
        <div className="flex min-h-0 flex-1 border-t border-l border-[#808080]">
          <div className="relative min-w-0 flex-1 bg-white">
            <div className="w-full overflow-hidden">
              <EstimateTable />
            </div>
            <div className="pointer-events-none absolute left-[11px] right-[-2px] top-[287px] h-[33px] border-2 border-[#ed1c24]" />
          </div>
          <VScroll thumb="h-[229px]" />
        </div>
        <div className="flex h-4 border-l border-[#808080]">
          <HScroll />
          <span className="w-4" />
        </div>
      </div>
      <div className="flex h-[21px] shrink-0 items-start gap-[2px]">
        <button type="button" className="h-[21px] w-[73px] whitespace-nowrap border-b-2 border-r-2 border-[#606060] pt-[3px]">Полный вид</button>
        {[
          ["Сокращенный вид", "w-[105px]"],
          ["Вид строки", "w-[67px]"],
          ["Объектная смета", "w-[101px]"],
          ["Предпросмотр", "w-[86px]"],
        ].map(([t, w]) => (
          <button key={t} type="button" className={`h-[19px] whitespace-nowrap border-b-2 border-l border-r-2 border-b-[#606060] border-l-white border-r-[#606060] pt-[2px] ${w}`}>
            {t}
          </button>
        ))}
      </div>
    </section>
  );
}

/* ---------- resources grid ---------- */

type Res = {
  icon: "man" | "truck" | "brick";
  code: string;
  name: string;
  unit: string;
  base: string;
  rate: string;
  vol: string;
  m: string[];
  pct: number;
  pctText: string;
  alt: string;
};

const RES: Res[] = [
  { icon: "man", code: "1-2.8", name: "Затраты труда рабочих, разряд работ 2.8", unit: "чел.-ч", base: "7,7", rate: "7,7", vol: "77", m: ["8,59", "0", "8,59", "0", "66,14"], pct: 100, pctText: "100%", alt: "цена - базовая из сбор" },
  { icon: "man", code: "2", name: "Затраты труда машинистов", unit: "чел.час", base: "0,88", rate: "0,88", vol: "8,8", m: ["0", "0", "0", "0", "0"], pct: 0, pctText: "0%", alt: "" },
  { icon: "truck", code: "030101", name: "Автопогрузчики 5 т", unit: "маш.ч", base: "0,33", rate: "0,33", vol: "3,3", m: ["89,99", "10,06", "89,99", "10,06", "29,7"], pct: 34.63, pctText: "34,63%", alt: "ЦЭМ  сб.03,поз.0101;  ц" },
  { icon: "truck", code: "050102", name: "Компрессоры передвижные с двигателем в", unit: "маш.ч", base: "0,46", rate: "0,46", vol: "4,6", m: ["90", "10,06", "90", "10,06", "41,4"], pct: 48.27, pctText: "48,27%", alt: "ЦЭМ  сб.05,поз.0102;  ц" },
  { icon: "truck", code: "153101", name: "Катки дорожные самоходные гладкие 5 т", unit: "маш.ч", base: "0,09", rate: "0,09", vol: "0,9", m: ["112,14", "14,4", "112,14", "14,4", "10,09"], pct: 11.77, pctText: "11,77%", alt: "ЦЭМ  сб.15,поз.3101;  ц" },
  { icon: "truck", code: "331101", name: "Трамбовки пневматические при работе от с", unit: "маш.ч", base: "0,93", rate: "0,93", vol: "9,3", m: ["4,91", "0", "4,91", "0", "4,57"], pct: 5.33, pctText: "5,33%", alt: "ЦЭМ  сб.33,поз.1101;  ц" },
  { icon: "brick", code: "408-0015", name: "Щебень из природного камня для строител", unit: "м3", base: "-5,1", rate: "-5,1", vol: "-51", m: ["108,4", "0", "108,4", "0", "-552,84"], pct: 0, pctText: "0%", alt: "ФССЦ, сб.408,поз.0015" },
];

const TONE = { man: "bg-[#d8ffeb]", truck: "bg-[#d6eaff]", brick: "bg-[#f4f2e6]" };

function ResourceTable() {
  const cell = "overflow-hidden whitespace-nowrap border-r border-b border-[#c0c0c0] p-0 pl-[2px] align-middle";
  const mid = "overflow-hidden border-r border-b border-[#c0c0c0] p-0 align-middle";
  return (
    <table className="w-[1274px] table-fixed border-separate border-spacing-0">
      <colgroup>
        <col className="w-[12px]" />
        <col className="w-[21px]" />
        <col className="w-[21px]" />
        <col className="w-[23px]" />
        <col className="w-[25px]" />
        <col className="w-[77px]" />
        <col className="w-[227px]" />
        <col className="w-[51px]" />
        <col className="w-[61px]" />
        <col className="w-[61px]" />
        <col className="w-[61px]" />
        <col className="w-[61px]" />
        <col className="w-[61px]" />
        <col className="w-[61px]" />
        <col className="w-[65px]" />
        <col className="w-[65px]" />
        <col className="w-[61px]" />
        <col className="w-[61px]" />
        <col className="w-[121px]" />
        <col className="w-[78px]" />
      </colgroup>
      <thead>
        <tr className="h-[18px]">
          {["", "Ста", "Тип", "Учт", "Доб\nв це", "Обоснование", "Наименование", "Ед.изм.\n(краткая)", "Базовый\nрасход на\nед.", "Поправка", "Расход на\nед.", "Объём"].map((t) => (
            <th key={t} rowSpan={2} className={`${TH} !whitespace-pre`}>{t}</th>
          ))}
          <th colSpan={6} className={TH}>Уровень цен</th>
          <th rowSpan={2} className={`${TH} !whitespace-pre`}>{"Альтернативное\nобоснование"}</th>
          <th rowSpan={2} className={`${TH} !whitespace-pre`}>{"Ви\nре"}</th>
        </tr>
        <tr className="h-[31px]">
          {["Базовая\nцена", "Базовая\nЗПМ", "Тек. цена\n[справочно]", "Тек. ЗПМ\n[справочно]", "Текущая\nстоимость", "Процент"].map((t) => (
            <th key={t} className={`${TH} !whitespace-pre`}>{t}</th>
          ))}
        </tr>
      </thead>
      <tbody>
        {RES.map((r) => {
          const sel = r.icon === "brick";
          return (
            <tr key={r.code} className={`h-[16px] ${TONE[r.icon]}`}>
              <td className="border-r border-b border-[#808080] bg-[#d4d0c8] p-0 pl-[3px] align-middle shadow-[inset_1px_1px_0_#ffffff]">
                {sel && <svg viewBox="0 0 6 12" className="h-[12px] w-[6px]" aria-hidden="true"><path d="M0 0L6 6L0 12Z" /></svg>}
              </td>
              <td className={mid}><div className="flex h-[15px] items-center justify-center">{sel && <HBadge />}</div></td>
              <td className={mid}>
                <div className="flex h-[15px] items-center justify-center">
                  {r.icon === "man" ? <Worker /> : r.icon === "truck" ? <Truck /> : <Bricks />}
                </div>
              </td>
              <td className={mid}><div className="flex h-[15px] items-center justify-center"><Check label={`Учтено ${r.code}`} checked /></div></td>
              <td className={`${mid} bg-[#ebe7ee]/50`}><div className="flex h-[15px] items-center justify-center"><Check label={`Добавить ${r.code}`} /></div></td>
              <td className={`${cell} font-bold text-[#b00000] ${TAHOMA}`}>{r.code}</td>
              <td className={`${cell} ${sel ? "bg-[#0a246a] text-white outline-1 outline-dotted -outline-offset-1 outline-[#f0c060]" : ""}`}>{r.name}</td>
              <td className={cell}>{r.unit}</td>
              <td className={cell}>{r.base}</td>
              <td className={cell} />
              <td className={cell}>
                <div className="flex h-[15px] items-center justify-between pr-[1px]">
                  {r.rate}
                  {sel && <NoV />}
                </div>
              </td>
              <td className={cell}>{r.vol}</td>
              {r.m.map((x, i) => (
                <td key={i} className={`${cell} text-[#b00000] ${TAHOMA} ${i === 4 ? "bg-[#ebe7ee]/50" : ""}`}>{x}</td>
              ))}
              <td className={`${mid} bg-white`}>
                <div className="grid h-[15px] items-center px-[2px]">
                  <span className="h-[11px] bg-[#bcb8ca] [grid-area:1/1]" style={{ width: `${r.pct}%` }} />
                  <span className="text-center [grid-area:1/1]">{r.pctText}</span>
                </div>
              </td>
              <td className={`${cell} !whitespace-pre`}>{r.alt}</td>
              <td className={cell}>Об</td>
            </tr>
          );
        })}
      </tbody>
    </table>
  );
}

function ResourcePanel() {
  const side = "flex h-[22px] w-[26px] items-center justify-center";
  return (
    <section className="flex shrink-0 border-t border-[#808080] pr-[3px] shadow-[inset_0_1px_0_#ffffff]">
      <div className="flex w-[13px] shrink-0 flex-col items-start pl-[2px] pt-[4px]">
        <DockClose label="Закрыть ресурсы" />
        <span className="ml-[2px] mt-[3px] flex flex-1 gap-px">
          <span className="w-[3px] border-l border-r border-l-white border-r-[#808080]" />
          <span className="w-[3px] border-l border-r border-l-white border-r-[#808080]" />
        </span>
      </div>
      <div className="min-w-0 flex-1 pt-[3px]">
        <div className="flex h-[20px] items-end pl-[2px]">
          <button type="button" className="h-[17px] w-[145px] whitespace-nowrap border-l border-t border-white">Лимитированные затраты</button>
          <button type="button" className="h-[20px] w-[107px] whitespace-nowrap border-l border-r-2 border-t border-l-white border-r-[#404040] border-t-white">Сметные ресурсы</button>
        </div>
        <div className="border border-b-2 border-r-2 border-t-white border-l-white border-r-[#606060] border-b-[#404040] pb-[2px] pl-[3px] pr-[2px] pt-[3px]">
          <div className="flex">
            <div className="flex w-[27px] shrink-0 flex-col self-start border border-b-[#808080] border-l-white border-r-[#808080] border-t-white pb-[1px] pt-[2px]">
              <span className="mx-[2px] mb-[2px] h-[3px] border border-b-[#808080] border-l-white border-r-[#808080] border-t-white" />
              <button type="button" aria-label="Добавить ресурс" className={side}><Plus /></button>
              <button type="button" aria-label="Поднять ресурс" className={`${side} mb-[2px]`}><BigUp /></button>
              <Line />
              <button type="button" aria-label="Удалить ресурс" className={`${side} my-[2px]`}><Cross /></button>
              <Line />
              <button type="button" aria-label="Поправка ресурса" className={`${side} my-[2px]`}><PlusMinus /></button>
              <Line />
              <button type="button" aria-label="Проверить ресурс" className={`${side} mt-[2px]`}><GreenV /></button>
            </div>
            <div className="flex min-w-0 flex-1 flex-col border-t border-l border-[#808080]">
              <div className="flex">
                <div className="h-[197px] min-w-0 flex-1 overflow-hidden bg-white">
                  <ResourceTable />
                </div>
                <VScroll thumb="h-[89px]" />
              </div>
              <div className="flex">
                <HScroll />
                <span className="w-4" />
              </div>
            </div>
          </div>
          <div className={`mt-[3px] h-[17px] ${SUNKEN}`} />
          <div className="mt-[2px] flex h-[18px] gap-[2px]">
            <span className={`flex w-[95px] items-center pl-[5px] ${SUNKEN}`}>Уровень цен</span>
            <span className={`flex w-[128px] items-center gap-[4px] whitespace-nowrap pl-[4px] ${SUNKEN}`}><Worker /> Стоимость = 66,14р</span>
            <span className={`flex w-[128px] items-center gap-[4px] whitespace-nowrap pl-[3px] ${SUNKEN}`}><Truck /> Стоимость = 85,76р</span>
            <span className={`flex flex-1 items-center gap-[4px] whitespace-nowrap pl-[3px] ${SUNKEN}`}><Bricks /> Стоимость = -552,84р</span>
          </div>
          <div className="h-px bg-[#808080]" />
        </div>
      </div>
    </section>
  );
}

function StatusBar() {
  return (
    <footer className={`mt-[2px] flex h-[31px] shrink-0 gap-[3px] border-t border-white px-[2px] py-px ${TAHOMA}`}>
      <span className={`w-[87px] ${SUNKEN}`} />
      <span className={`w-[297px] ${SUNKEN}`} />
      <span className={`flex flex-1 items-center pl-[3px] ${SUNKEN}`}>Итого по смете: Уровень цен: 1 072 870 руб.</span>
      <span className={`flex w-[31px] items-center justify-center ${SUNKEN}`}>EN</span>
    </footer>
  );
}

export default function App() {
  return (
    <div className="relative flex min-h-screen flex-col overflow-hidden border border-[#808080] bg-[#d4d0c8] font-['Liberation_Sans',sans-serif] text-[11px] leading-[13px] text-black">
      <Bars />
      <main className="flex flex-1 flex-col">
        <div className="flex flex-1">
          <PricePanel />
          <EstimatePanel />
        </div>
        <ResourcePanel />
      </main>
      <StatusBar />
      <svg viewBox="0 0 240 380" className="pointer-events-none absolute left-[204px] top-[474px] h-[380px] w-[240px]" aria-hidden="true">
        <path d="M5 373L226 17" stroke="#ed1c24" strokeWidth="1.800" />
        <path d="M233 4L219 13L231 20Z" fill="#ed1c24" stroke="#ed1c24" />
      </svg>
    </div>
  );
}
